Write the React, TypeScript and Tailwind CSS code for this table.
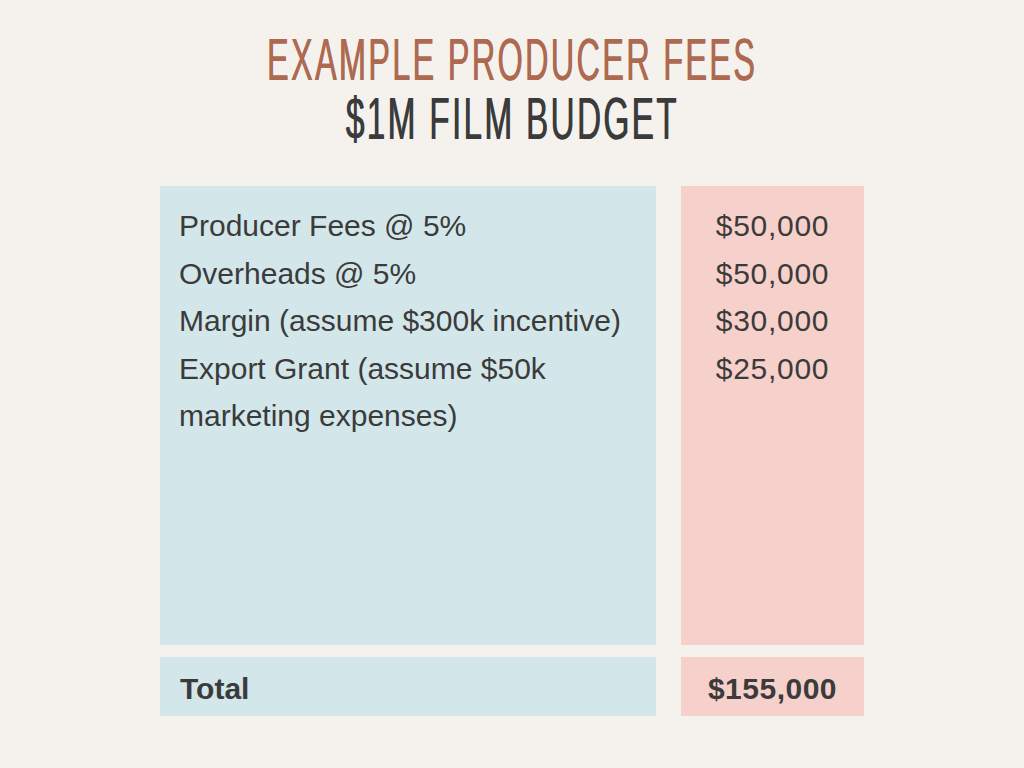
import React from "react";

const items = [
  { label: ["Producer Fees @ 5%"], value: "$50,000" },
  { label: ["Overheads @ 5%"], value: "$50,000" },
  { label: ["Margin (assume $300k incentive)"], value: "$30,000" },
  { label: ["Export Grant (assume $50k", "marketing expenses)"], value: "$25,000" },
];

export default function App() {
  return (
    <div className="w-[1024px] h-[768px] bg-[#f5f2ee] flex flex-col items-center text-[#3b3b3b] [font-family:'Liberation_Sans',Arial,sans-serif]">
      <div className="pt-[30px] flex flex-col items-center">
        <div className="text-[58.6px] leading-[59px] tracking-[4px] whitespace-nowrap scale-x-[0.556] text-[#ad6a50] [text-shadow:1px_0_0_#ad6a50]">
          EXAMPLE PRODUCER FEES
        </div>
        <div className="text-[58.6px] leading-[59px] tracking-[4px] whitespace-nowrap scale-x-[0.57] text-[#3b3b3b] [text-shadow:1px_0_0_#3b3b3b]">
          $1M FILM BUDGET
        </div>
      </div>

      <div className="mt-[38px] w-[704px] grid grid-cols-[496px_183px] gap-x-[25px] gap-y-[12px]">
        <div className="h-[459px] bg-[#d3e7ea] pl-[19px] pt-[16px] text-[30px] leading-[47.5px]">
          {items.map((it, i) =>
            it.label.map((l, j) => (
              <div key={`${i}-${j}`} className="whitespace-nowrap">
                {l}
              </div>
            ))
          )}
        </div>
        <div className="h-[459px] bg-[#f6d0ca] pt-[16px] text-[30px] leading-[47.5px] tracking-[0.7px] flex flex-col items-center">
          {items.map((it, i) => (
            <div key={i} className="whitespace-nowrap">
              {it.value}
            </div>
          ))}
        </div>
        <div className="h-[59px] bg-[#d3e7ea] pl-[20px] pt-[3px] flex items-center text-[30px] font-bold">
          Total
        </div>
        <div className="h-[59px] bg-[#f6d0ca] pt-[3px] flex items-center justify-center text-[30px] tracking-[0.5px] font-bold">
          $155,000
        </div>
      </div>
    </div>
  );
}
